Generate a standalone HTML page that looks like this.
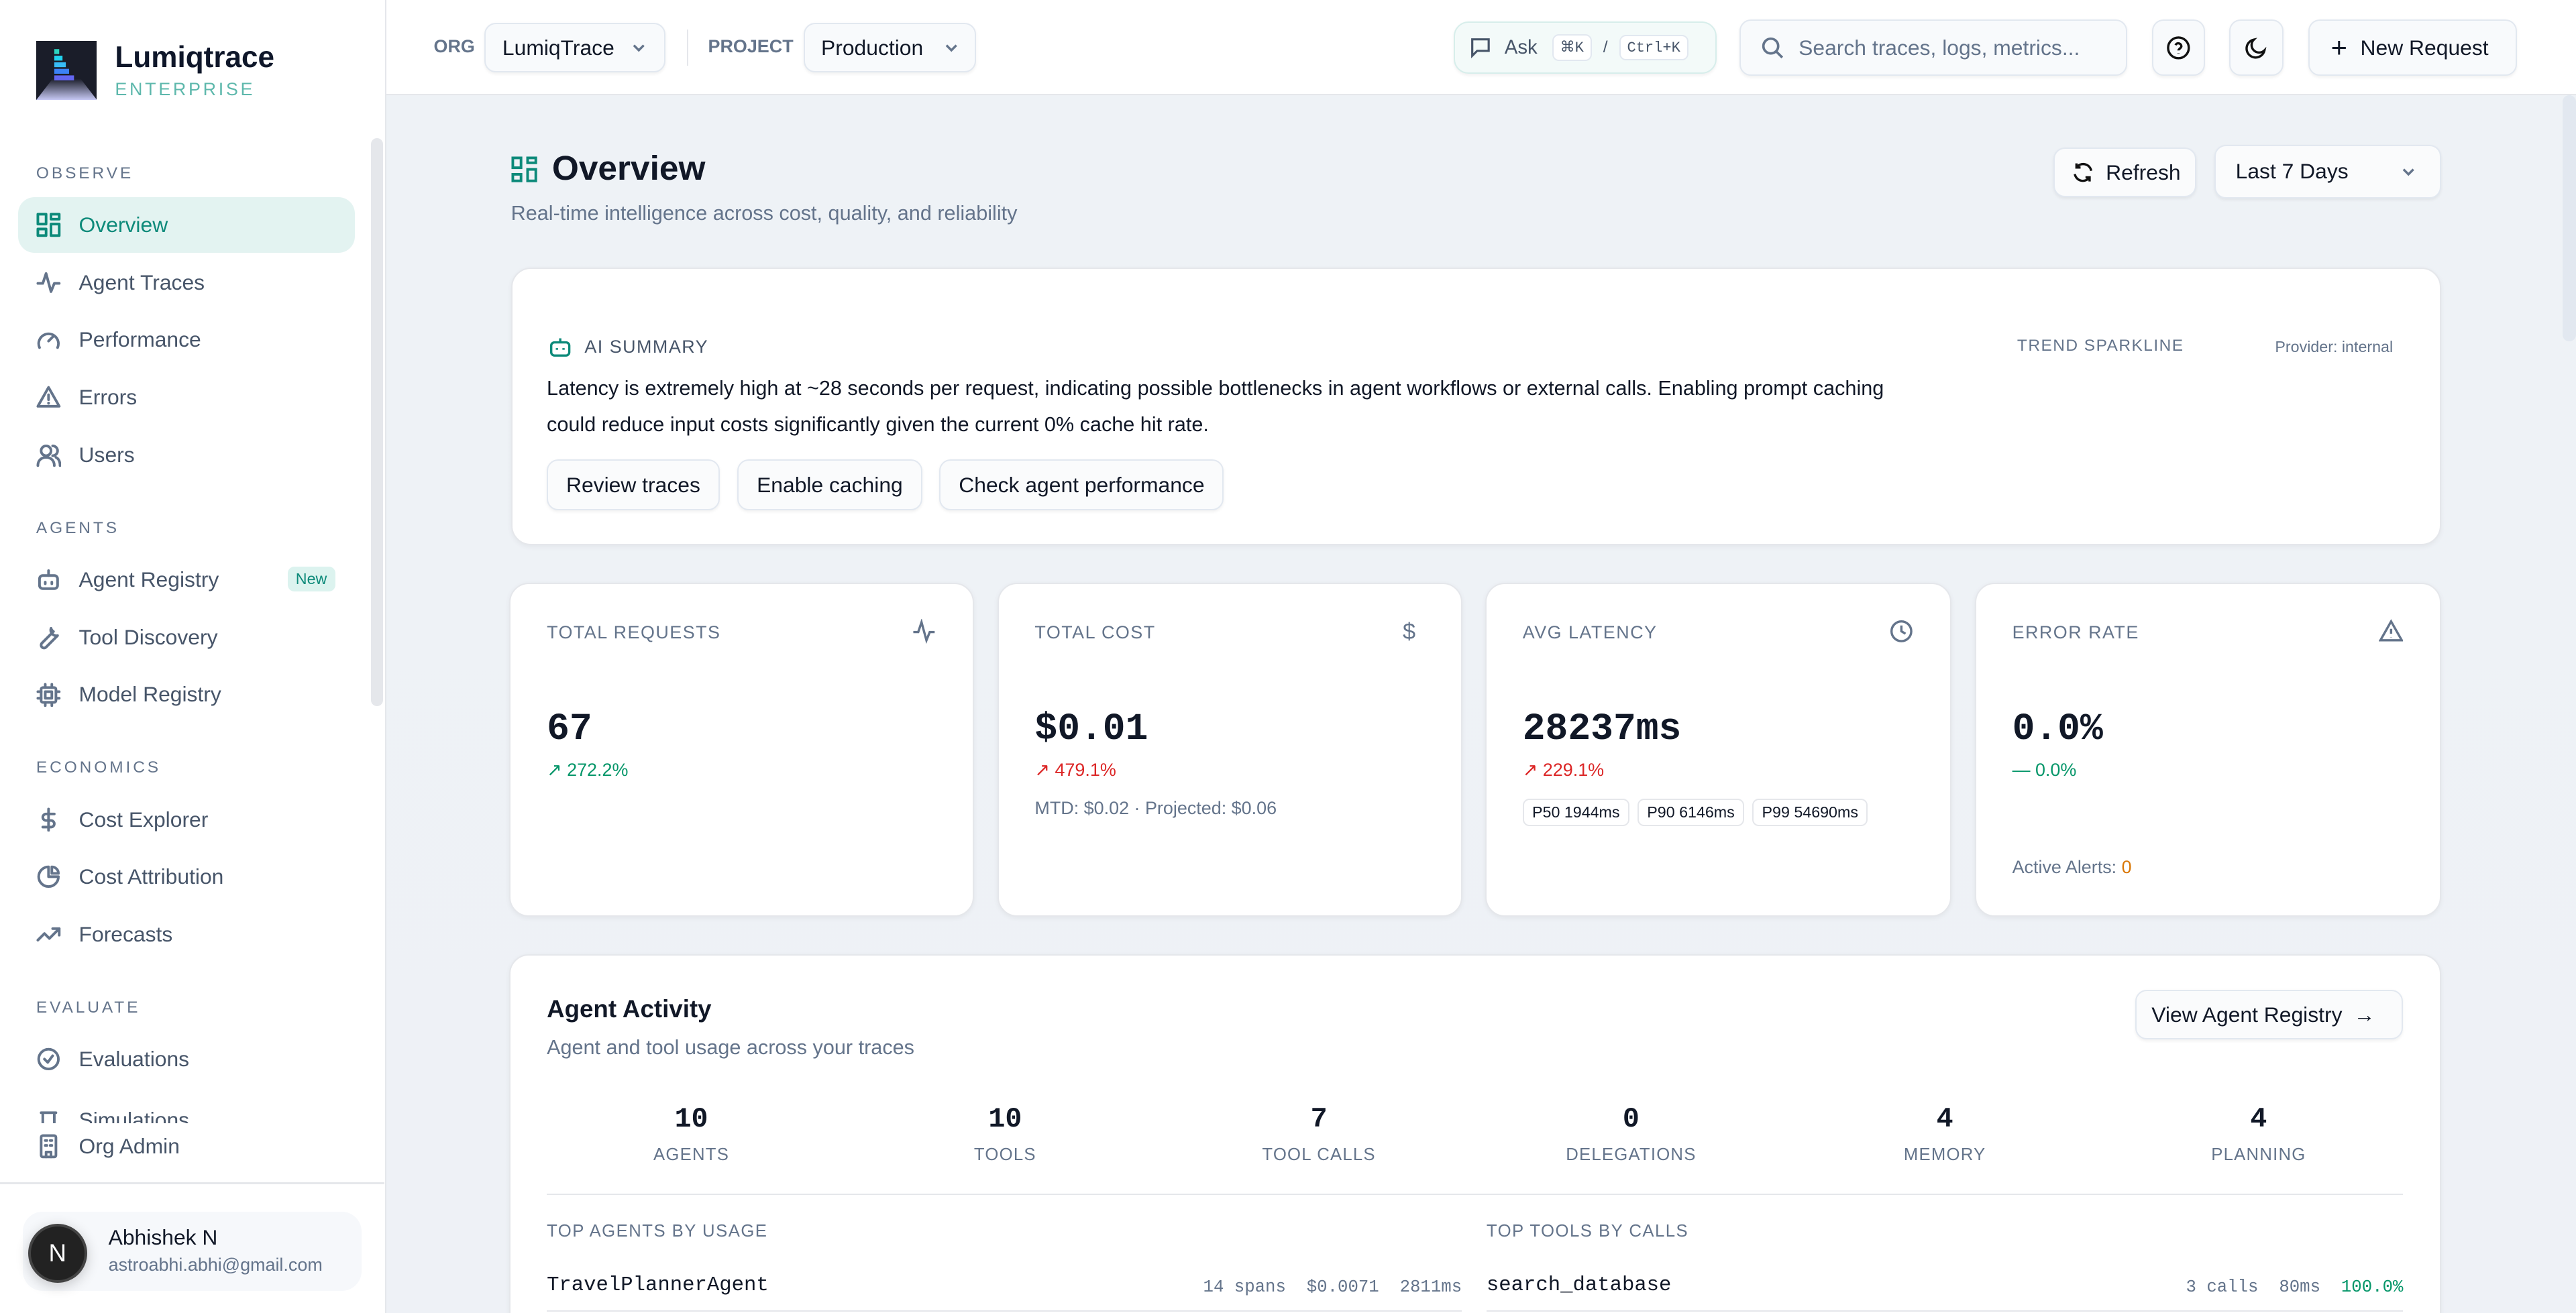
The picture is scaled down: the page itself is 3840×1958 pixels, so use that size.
<!DOCTYPE html>
<html><head><meta charset="utf-8">
<style>
*{box-sizing:border-box;margin:0;padding:0}
html,body{width:3840px;height:1958px;overflow:hidden}
body{background:#eef2f6;font-family:"Liberation Sans",sans-serif;color:#111827}
#r{zoom:2.449;width:1568px;height:800px;position:relative;overflow:hidden;background:linear-gradient(180deg,#eef2f6,#eef1f6)}
.a{position:absolute}
.side{left:0;top:0;width:235px;height:800px;background:#fff;border-right:1px solid #e5e7eb}
.sec{position:absolute;left:22px;font-size:10px;letter-spacing:1.6px;color:#64748b}
.it{position:absolute;left:22px;font-size:13px;color:#475569;display:flex;align-items:center;gap:11px;height:20px}
.it svg{width:15px;height:15px;stroke:#64748b;fill:none;stroke-width:1.6;stroke-linecap:round;stroke-linejoin:round}
.top{left:235px;top:0;right:0;height:58px;background:#fff;border-bottom:1px solid #e5e7eb}
.btn{position:absolute;background:#f8fafc;border:1px solid #e2e8f0;border-radius:7px;box-shadow:0 1px 2px rgba(0,0,0,.06);display:flex;align-items:center;font-size:13px;color:#111827}
.card{position:absolute;background:#fff;border:1px solid #e5e7eb;border-radius:12px;box-shadow:0 1px 3px rgba(0,0,0,.05)}
.lbl{font-size:11px;letter-spacing:.6px;color:#64748b}
.mono{font-family:"Liberation Mono",monospace}
.big{font-family:"Liberation Mono",monospace;font-weight:bold;font-size:23px;color:#111827}
.chip{display:inline-block;border:1px solid #e5e7eb;border-radius:4px;font-size:9.5px;padding:2px 5px;color:#111827;margin-right:5px}
.st{position:absolute;top:90px;width:120px;text-align:center}
.st b{display:block;font-family:"Liberation Mono",monospace;font-size:17px}
.st span{display:block;margin-top:6px;font-size:10.5px;letter-spacing:.5px;color:#64748b}
.chev{width:10px;height:10px;fill:none;stroke:#64748b;stroke-width:1.4}
</style></head><body><div id="r">

<div class="a side">
 <svg class="a" style="left:22px;top:25px" width="37" height="36" viewBox="0 0 37 36"><rect width="37" height="36" fill="#1a1d29"/><defs><linearGradient id="g" x1="0" y1="0" x2="0" y2="1"><stop offset="0" stop-color="#1a1d29"/><stop offset="1" stop-color="#c7c9f5"/></linearGradient></defs><path d="M10 23H27L37 36H0Z" fill="url(#g)"/><rect x="11" y="5" width="3" height="3" fill="#2dd4bf"/><rect x="11" y="9" width="5" height="3" fill="#22d3ee"/><rect x="11" y="13" width="7" height="3" fill="#38bdf8"/><rect x="11" y="17" width="9" height="3" fill="#3b82f6"/><rect x="11" y="21" width="12" height="3" fill="#6366f1"/></svg>
 <div class="a" style="left:70px;top:25px;font-size:18px;font-weight:bold;color:#0f172a">Lumiqtrace</div>
 <div class="a" style="left:70px;top:48px;font-size:11px;letter-spacing:1.5px;color:#5eb8ac">ENTERPRISE</div>
 <div class="a" style="left:226px;top:84px;width:7px;height:346px;background:#e5e7eb;border-radius:4px"></div>

 <div class="sec" style="top:100px">OBSERVE</div>
 <div class="a" style="left:11px;top:120px;width:205px;height:34px;background:#e3f3f1;border-radius:10px"></div>
 <div class="it" style="top:127px;color:#0d8a7a"><svg viewBox="0 0 15 15" style="stroke:#0d8a7a"><rect x="1" y="1" width="5" height="6"/><rect x="9" y="1" width="5" height="3"/><rect x="9" y="7" width="5" height="7"/><rect x="1" y="10" width="5" height="4"/></svg>Overview</div>
 <div class="it" style="top:162px"><svg viewBox="0 0 15 15"><path d="M1 8h3l2-6 3 11 2-5h3"/></svg>Agent Traces</div>
 <div class="it" style="top:197px"><svg viewBox="0 0 15 15"><path d="M2 12a6 6 0 1 1 11 0M7.5 8l3-3"/></svg>Performance</div>
 <div class="it" style="top:232px"><svg viewBox="0 0 15 15"><path d="M7.5 1.5L14 13H1ZM7.5 6v3M7.5 11v.2"/></svg>Errors</div>
 <div class="it" style="top:267px"><svg viewBox="0 0 15 15"><circle cx="6" cy="5" r="3"/><path d="M1 14c0-3 2-5 5-5s5 2 5 5M10 2a3 3 0 0 1 0 6M12 9c2 1 2.5 3 2.5 5"/></svg>Users</div>

 <div class="sec" style="top:316px">AGENTS</div>
 <div class="it" style="top:343px"><svg viewBox="0 0 15 15"><rect x="2" y="5" width="11" height="8" rx="2"/><path d="M7.5 2v3M5.5 9v1M9.5 9v1"/></svg>Agent Registry</div>
 <div class="a" style="left:175px;top:345px;font-size:9.5px;color:#0d8a7a;background:#dcf3ef;border-radius:4px;padding:2px 5px">New</div>
 <div class="it" style="top:378px"><svg viewBox="0 0 15 15"><path d="M9 2a3.5 3.5 0 0 0 4 4.5L6 13.5a1.5 1.5 0 0 1-2.5-2.5L10.5 4A3.5 3.5 0 0 1 9 2z"/></svg>Tool Discovery</div>
 <div class="it" style="top:413px"><svg viewBox="0 0 15 15"><rect x="3" y="3" width="9" height="9" rx="1"/><rect x="5.5" y="5.5" width="4" height="4"/><path d="M5.5 1v2M9.5 1v2M5.5 12v2M9.5 12v2M1 5.5h2M1 9.5h2M12 5.5h2M12 9.5h2"/></svg>Model Registry</div>

 <div class="sec" style="top:462px">ECONOMICS</div>
 <div class="it" style="top:489px"><svg viewBox="0 0 15 15"><path d="M7.5 1v13M11 4H6a2 2 0 0 0 0 4h3a2 2 0 0 1 0 4H4"/></svg>Cost Explorer</div>
 <div class="it" style="top:524px"><svg viewBox="0 0 15 15"><path d="M7.5 1.5a6 6 0 1 0 6 6h-6z"/><path d="M9.5 1.5a4 4 0 0 1 4 4h-4z"/></svg>Cost Attribution</div>
 <div class="it" style="top:559px"><svg viewBox="0 0 15 15"><path d="M1 11l4-4 3 3 6-6M10 4h4v4"/></svg>Forecasts</div>

 <div class="sec" style="top:608px">EVALUATE</div>
 <div class="it" style="top:635px"><svg viewBox="0 0 15 15"><circle cx="7.5" cy="7.5" r="6"/><path d="M5 7.5l2 2 3-4"/></svg>Evaluations</div>
 <div class="a" style="left:0;top:672px;width:226px;height:12px;overflow:hidden"><div class="it" style="top:0px"><svg viewBox="0 0 15 15"><path d="M3 3h9M4 3v10h7V3"/></svg>Simulations</div></div>
 <div class="it" style="top:688px"><svg viewBox="0 0 15 15"><rect x="3" y="1" width="9" height="13" rx="1"/><path d="M5.5 4h1M8.5 4h1M5.5 7h1M8.5 7h1M6 14v-3h3v3"/></svg>Org Admin</div>
 <div class="a" style="left:0;top:720px;width:234px;height:1px;background:#e5e7eb"></div>
 <div class="a" style="left:14px;top:738px;width:206px;height:48px;background:#f6f8fb;border-radius:12px"></div>
 <div class="a" style="left:17px;top:745px;width:36px;height:36px;border-radius:50%;background:#222;border:2px solid #444;color:#fff;font-size:15px;display:flex;align-items:center;justify-content:center;box-shadow:0 2px 8px rgba(0,0,0,.2)">N</div>
 <div class="a" style="left:66px;top:746px;font-size:13px;color:#111827">Abhishek N</div>
 <div class="a" style="left:66px;top:764px;font-size:11px;color:#64748b">astroabhi.abhi@gmail.com</div>
</div>

<div class="a top">
 <div class="a" style="left:29px;top:22px;font-size:11px;font-weight:bold;color:#64748b">ORG</div>
 <div class="btn" style="left:60px;top:14px;width:110px;height:30px;padding-left:10px">LumiqTrace <svg class="chev" style="margin-left:10px" viewBox="0 0 10 10"><path d="M2 3.5l3 3 3-3"/></svg></div>
 <div class="a" style="left:183px;top:18px;width:1px;height:22px;background:#e5e7eb"></div>
 <div class="a" style="left:196px;top:22px;font-size:11px;font-weight:bold;color:#64748b">PROJECT</div>
 <div class="btn" style="left:254px;top:14px;width:105px;height:30px;padding-left:10px">Production <svg class="chev" style="margin-left:12px" viewBox="0 0 10 10"><path d="M2 3.5l3 3 3-3"/></svg></div>
 <div class="btn" style="left:650px;top:13px;width:160px;height:32px;background:#f3faf9;border-color:#d7eeeb;padding-left:9px;font-size:12px;color:#475569;border-radius:9px"><svg width="13" height="13" viewBox="0 0 13 13" fill="none" stroke="#475569" stroke-width="1.3"><path d="M1.5 1.5h10v7h-7l-3 3z"/></svg><span style="margin-left:8px">Ask</span><span class="mono" style="margin-left:9px;border:1px solid #e2e8f0;border-radius:4px;font-size:9px;padding:2px 4px;background:#fff">⌘K</span><span style="margin:0 7px;font-size:10px">/</span><span class="mono" style="border:1px solid #e2e8f0;border-radius:4px;font-size:9px;padding:2px 4px;background:#fff">Ctrl+K</span></div>
 <div class="btn" style="left:824px;top:12px;width:236px;height:34px;padding-left:12px;color:#64748b"><svg width="14" height="14" viewBox="0 0 14 14" fill="none" stroke="#64748b" stroke-width="1.5"><circle cx="6" cy="6" r="4.5"/><path d="M9.5 9.5l3.5 3.5"/></svg><span style="margin-left:9px">Search traces, logs, metrics...</span></div>
 <div class="btn" style="left:1075px;top:12px;width:32px;height:34px;justify-content:center"><svg width="15" height="15" viewBox="0 0 15 15" fill="none" stroke="#111" stroke-width="1.4"><circle cx="7.5" cy="7.5" r="6.3"/><path d="M5.7 5.8a1.9 1.9 0 0 1 3.6.7c0 1.2-1.8 1.6-1.8 2.6M7.5 10.8v.3"/></svg></div>
 <div class="btn" style="left:1122px;top:12px;width:33px;height:34px;justify-content:center"><svg width="15" height="15" viewBox="0 0 15 15" fill="none" stroke="#111" stroke-width="1.4"><path d="M12.5 9A5.5 5.5 0 1 1 6 2.5a4.3 4.3 0 0 0 6.5 6.5z"/></svg></div>
 <div class="btn" style="left:1170px;top:12px;width:127px;height:34px;padding-left:13px"><span style="font-size:17px;font-weight:300;margin-right:8px">+</span>New Request</div>
</div>
<div class="a" style="left:1560px;top:58px;width:8px;height:150px;background:#e2e8f0;border-radius:4px"></div>

<svg class="a" style="left:311px;top:95px" width="16" height="16" viewBox="0 0 16 16" fill="none" stroke="#0d8a7a" stroke-width="1.6"><rect x="1" y="1" width="5" height="6"/><rect x="10" y="1" width="5" height="3"/><rect x="10" y="8" width="5" height="7"/><rect x="1" y="11" width="5" height="4"/></svg>
<div class="a" style="left:336px;top:90px;font-size:21px;font-weight:bold;color:#111827">Overview</div>
<div class="a" style="left:311px;top:123px;font-size:12.5px;color:#64748b">Real-time intelligence across cost, quality, and reliability</div>
<div class="btn" style="left:1250px;top:90px;width:87px;height:30px;padding-left:10px;background:#fafbfc"><svg width="14" height="14" viewBox="0 0 14 14" fill="none" stroke="#111" stroke-width="1.4"><path d="M12 6A5 5 0 0 0 3 4M2 8a5 5 0 0 0 9 2M3 1.5V4h2.5M11 12.5V10H8.5"/></svg><span style="margin-left:7px">Refresh</span></div>
<div class="btn" style="left:1348px;top:88px;width:138px;height:33px;padding-left:12px;background:#fafbfc">Last 7 Days<svg class="chev" style="margin-left:auto;margin-right:14px" viewBox="0 0 10 10"><path d="M2 3.5l3 3 3-3"/></svg></div>

<div class="card" style="left:311px;top:163px;width:1175px;height:169px">
 <svg class="a" style="left:22px;top:41px" width="14" height="13" viewBox="0 0 14 13" fill="none" stroke="#0d8a7a" stroke-width="1.4"><rect x="1.5" y="3.5" width="11" height="8" rx="2"/><path d="M7 1v2.5M5 7v1M9 7v1"/></svg>
 <div class="a lbl" style="left:44px;top:41px;color:#475569">AI SUMMARY</div>
 <div class="a lbl" style="left:916px;top:41px;font-size:10px">TREND SPARKLINE</div>
 <div class="a" style="left:1073px;top:42px;font-size:9.5px;color:#64748b">Provider: internal</div>
 <div class="a" style="left:21px;top:62px;width:830px;font-size:12.5px;line-height:22px;color:#111827">Latency is extremely high at ~28 seconds per request, indicating possible bottlenecks in agent workflows or external calls. Enabling prompt caching could reduce input costs significantly given the current 0% cache hit rate.</div>
 <div class="btn" style="left:21px;top:116px;height:31px;padding:0 11px;background:#fafbfc">Review traces</div>
 <div class="btn" style="left:137px;top:116px;height:31px;padding:0 11px;background:#fafbfc">Enable caching</div>
 <div class="btn" style="left:260px;top:116px;height:31px;padding:0 11px;background:#fafbfc">Check agent performance</div>
</div>

<div class="card" style="left:310px;top:355px;width:283px;height:203px">
 <div class="a lbl" style="left:22px;top:23px">TOTAL REQUESTS</div>
 <svg class="a" style="left:244px;top:21px" width="15" height="15" viewBox="0 0 15 15" fill="none" stroke="#64748b" stroke-width="1.4"><path d="M1 8h3l2-6 3 11 2-5h3"/></svg>
 <div class="a big" style="left:22px;top:75px">67</div>
 <div class="a" style="left:22px;top:107px;font-size:11px;color:#059669">↗ 272.2%</div>
</div>
<div class="card" style="left:607px;top:355px;width:283px;height:203px">
 <div class="a lbl" style="left:22px;top:23px">TOTAL COST</div>
 <div class="a" style="left:246px;top:21px;font-size:14px;color:#64748b">$</div>
 <div class="a big" style="left:22px;top:75px">$0.01</div>
 <div class="a" style="left:22px;top:107px;font-size:11px;color:#dc2626">↗ 479.1%</div>
 <div class="a" style="left:22px;top:130px;font-size:11px;color:#64748b">MTD: $0.02 · Projected: $0.06</div>
</div>
<div class="card" style="left:904px;top:355px;width:284px;height:203px">
 <div class="a lbl" style="left:22px;top:23px">AVG LATENCY</div>
 <svg class="a" style="left:245px;top:21px" width="15" height="15" viewBox="0 0 15 15" fill="none" stroke="#64748b" stroke-width="1.4"><circle cx="7.5" cy="7.5" r="6"/><path d="M7.5 4v3.5l2.5 1.5"/></svg>
 <div class="a big" style="left:22px;top:75px">28237ms</div>
 <div class="a" style="left:22px;top:107px;font-size:11px;color:#dc2626">↗ 229.1%</div>
 <div class="a" style="left:22px;top:128px;white-space:nowrap"><span class="chip">P50 1944ms</span><span class="chip">P90 6146ms</span><span class="chip">P99 54690ms</span></div>
</div>
<div class="card" style="left:1202px;top:355px;width:284px;height:203px">
 <div class="a lbl" style="left:22px;top:23px">ERROR RATE</div>
 <svg class="a" style="left:245px;top:21px" width="15" height="15" viewBox="0 0 15 15" fill="none" stroke="#64748b" stroke-width="1.4"><path d="M7.5 1.5L14 13H1ZM7.5 6v3M7.5 11v.2"/></svg>
 <div class="a big" style="left:22px;top:75px">0.0%</div>
 <div class="a" style="left:22px;top:107px;font-size:11px;color:#059669">— 0.0%</div>
 <div class="a" style="left:22px;top:166px;font-size:11px;color:#64748b">Active Alerts: <span style="color:#d97706">0</span></div>
</div>

<div class="card" style="left:310px;top:581px;width:1176px;height:240px">
 <div class="a" style="left:22px;top:24px;font-size:15px;font-weight:bold;color:#111827">Agent Activity</div>
 <div class="a" style="left:22px;top:49px;font-size:12.5px;color:#64748b">Agent and tool usage across your traces</div>
 <div class="btn" style="left:989px;top:21px;width:163px;height:30px;padding-left:9px;background:#fafbfc">View Agent Registry<span style="margin-left:7px">→</span></div>
 <div class="st" style="left:50px"><b>10</b><span>AGENTS</span></div>
 <div class="st" style="left:241px"><b>10</b><span>TOOLS</span></div>
 <div class="st" style="left:432px"><b>7</b><span>TOOL CALLS</span></div>
 <div class="st" style="left:622px"><b>0</b><span>DELEGATIONS</span></div>
 <div class="st" style="left:813px"><b>4</b><span>MEMORY</span></div>
 <div class="st" style="left:1004px"><b>4</b><span>PLANNING</span></div>
 <div class="a" style="left:22px;top:145px;width:1130px;height:1px;background:#e5e7eb"></div>
 <div class="a lbl" style="left:22px;top:162px;font-size:10.5px">TOP AGENTS BY USAGE</div>
 <div class="a lbl" style="left:594px;top:162px;font-size:10.5px">TOP TOOLS BY CALLS</div>
 <div class="a mono" style="left:22px;top:194px;font-size:12.5px">TravelPlannerAgent</div>
 <div class="a mono" style="left:400px;top:196px;width:179px;text-align:right;font-size:10.5px;color:#64748b">14 spans&nbsp; $0.0071&nbsp; 2811ms</div>
 <div class="a mono" style="left:594px;top:194px;font-size:12.5px">search_database</div>
 <div class="a mono" style="left:960px;top:196px;width:192px;text-align:right;font-size:10.5px;color:#64748b">3 calls&nbsp; 80ms&nbsp; <span style="color:#059669">100.0%</span></div>
 <div class="a" style="left:22px;top:216px;width:557px;height:1px;background:#e5e7eb"></div>
 <div class="a" style="left:594px;top:216px;width:558px;height:1px;background:#e5e7eb"></div>
</div>

</div></body></html>
